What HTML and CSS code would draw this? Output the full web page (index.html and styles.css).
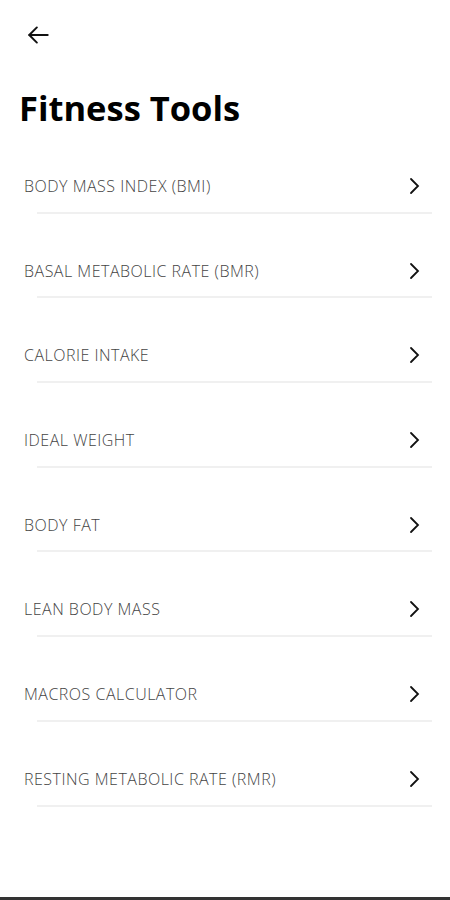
FILE: index.html
```html
<!DOCTYPE html>
<html lang="en">
<head>
    <meta name="viewport" content="width=device-width, initial-scale=1.0">
    <title>Fitness Tools</title>
    <link rel="stylesheet" href="styles.css">
</head>
<body>
    <div class="screen">
        <!-- Top bar -->
        <div class="top-bar">
            <svg class="back" width="27" height="26" viewBox="0 0 24 24" fill="none" stroke="#111" stroke-width="1.8" stroke-linecap="round" stroke-linejoin="round">
                <path d="M20.5 12H3.5"/>
                <path d="M10.5 5l-7 7 7 7"/>
            </svg>
        </div>
        <h1 class="title">Fitness Tools</h1>
        <!-- Tool list -->
        <ul class="tools">
            <li class="tool"><span>BODY MASS INDEX (BMI)</span><svg class="chevron" viewBox="0 0 12 18"><path d="M2 2l7 7-7 7"/></svg></li>
            <li class="tool"><span>BASAL METABOLIC RATE (BMR)</span><svg class="chevron" viewBox="0 0 12 18"><path d="M2 2l7 7-7 7"/></svg></li>
            <li class="tool"><span>CALORIE INTAKE</span><svg class="chevron" viewBox="0 0 12 18"><path d="M2 2l7 7-7 7"/></svg></li>
            <li class="tool"><span>IDEAL WEIGHT</span><svg class="chevron" viewBox="0 0 12 18"><path d="M2 2l7 7-7 7"/></svg></li>
            <li class="tool"><span>BODY FAT</span><svg class="chevron" viewBox="0 0 12 18"><path d="M2 2l7 7-7 7"/></svg></li>
            <li class="tool"><span>LEAN BODY MASS</span><svg class="chevron" viewBox="0 0 12 18"><path d="M2 2l7 7-7 7"/></svg></li>
            <li class="tool"><span>MACROS CALCULATOR</span><svg class="chevron" viewBox="0 0 12 18"><path d="M2 2l7 7-7 7"/></svg></li>
            <li class="tool"><span>RESTING METABOLIC RATE (RMR)</span><svg class="chevron" viewBox="0 0 12 18"><path d="M2 2l7 7-7 7"/></svg></li>
        </ul>
        <div class="nav-edge"></div>
    </div>
</body>
</html>
```

FILE: styles.css
```css
body {
    margin: 0;
    background-color: white;
    font-family: 'Open Sans', sans-serif;
    color: #111;
}
.screen {
    display: flex;
    flex-direction: column;
    height: 900px;
}
.top-bar {
    height: 70px;
    padding-left: 25px;
    display: flex;
    align-items: center;
}
.back {
    display: block;
}
.title {
    margin: 16px 0 0 19px;
    font-size: 34.5px;
    font-weight: 700;
    line-height: 44px;
    color: #000;
}
.tools {
    list-style: none;
    margin: -2px 0 0 0;
    padding: 0;
}
.tool {
    position: relative;
    height: 84.7px;
    display: flex;
    align-items: flex-start;
    justify-content: space-between;
    padding: 48px 29px 0 24px;
    box-sizing: border-box;
    font-size: 16px;
    line-height: 20px;
    font-weight: 300;
    letter-spacing: 0.5px;
    color: #444;
}
.tool::after {
    content: "";
    position: absolute;
    left: 37px;
    right: 18px;
    bottom: -1px;
    height: 2px;
    background-color: #f0f0f0;
}
.chevron {
    width: 12px;
    height: 18px;
    margin-top: 1px;
    fill: none;
    stroke: #111;
    stroke-width: 1.8;
    stroke-linecap: round;
}
.nav-edge {
    margin-top: auto;
    height: 3px;
    background-color: #333;
}
```
